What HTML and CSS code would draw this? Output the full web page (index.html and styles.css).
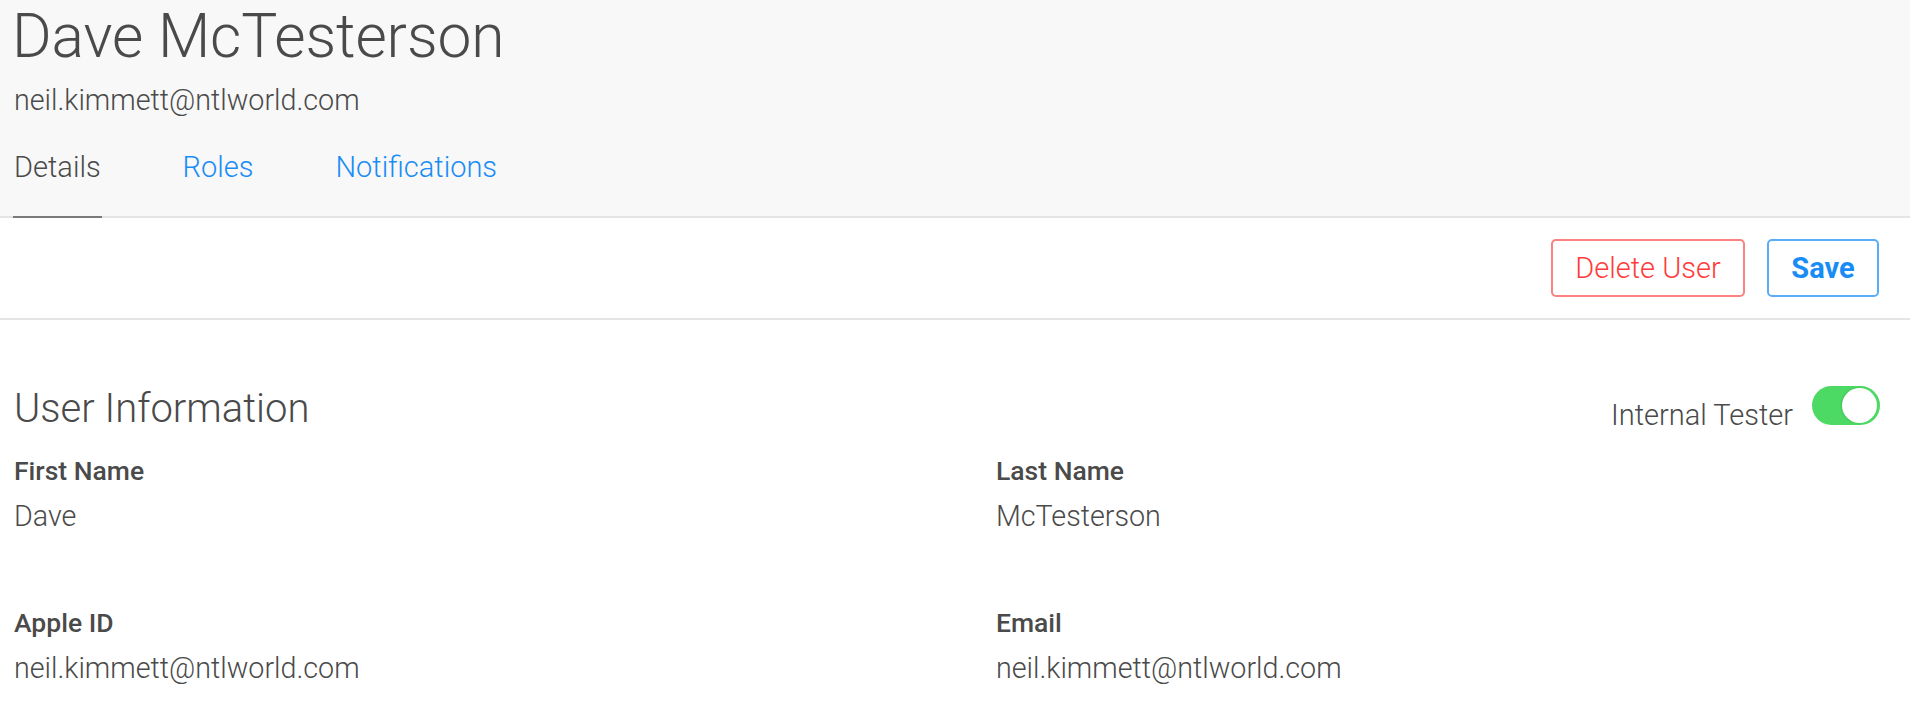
FILE: index.html
```html
<!DOCTYPE html>
<html lang="en">
<head>
<meta charset="utf-8">
<title>Dave McTesterson</title>
<link rel="stylesheet" href="styles.css">
</head>
<body>
<header class="header">
  <h1 class="title">Dave McTesterson</h1>
  <div class="subtitle">neil.kimmett@ntlworld.com</div>
  <nav class="tabs">
    <a class="tab active">Details</a>
    <a class="tab">Roles</a>
    <a class="tab">Notifications</a>
  </nav>
</header>
<div class="toolbar">
  <button class="btn btn-delete">Delete User</button>
  <button class="btn btn-save">Save</button>
</div>
<section class="section">
  <div class="section-head">
    <h2 class="section-title">User Information</h2>
    <div class="tester">
      <span class="tester-label">Internal Tester</span>
      <span class="switch"><span class="knob"></span></span>
    </div>
  </div>
  <div class="fields">
    <div class="field">
      <div class="label">First Name</div>
      <div class="value">Dave</div>
    </div>
    <div class="field">
      <div class="label">Last Name</div>
      <div class="value">McTesterson</div>
    </div>
    <div class="field">
      <div class="label">Apple ID</div>
      <div class="value">neil.kimmett@ntlworld.com</div>
    </div>
    <div class="field">
      <div class="label">Email</div>
      <div class="value">neil.kimmett@ntlworld.com</div>
    </div>
  </div>
</section>
</body>
</html>
```

FILE: styles.css
```css
* { box-sizing: border-box; }
html, body { margin: 0; padding: 0; background: #ffffff; }
body {
  font-family: Roboto, "Liberation Sans", Arial, sans-serif;
  font-weight: 300;
  color: #4a4a4a;
  width: 1910px;
  height: 724px;
  overflow: hidden;
}

.header {
  background: #f8f8f8;
  border-bottom: 2px solid #e4e4e4;
  padding: 2px 31px 0 14px;
}
.title {
  margin: 0 0 0 -2px;
  font-size: 60.5px;
  line-height: 70px;
  font-weight: 300;
  color: #4a4a4a;
  letter-spacing: -0.1px;
}
.subtitle {
  margin-top: 11px;
  font-size: 28.7px;
  line-height: 34px;
  color: #4a4a4a;
}
.tabs {
  display: flex;
  gap: 81px;
  margin-top: 33px;
  margin-bottom: -2px;
}
.tab {
  font-size: 29px;
  line-height: 34px;
  padding: 0 1px 32px;
  border-bottom: 2px solid transparent;
  color: #1a8cf5;
  margin-left: -1px;
}
.tab.active {
  color: #4a4a4a;
  border-bottom-color: #7a7a7a;
}

.toolbar {
  display: flex;
  justify-content: flex-end;
  gap: 22px;
  padding: 21px 31px;
  border-bottom: 2px solid #e4e4e4;
}
.btn {
  font-family: Roboto, "Liberation Sans", Arial, sans-serif;
  font-size: 29px;
  line-height: 54px;
  height: 58px;
  padding: 0 20px;
  background: #ffffff;
  border-radius: 5px;
  border: 2px solid;
  cursor: pointer;
}
.btn-delete {
  font-weight: 300;
  color: #ff3b3b;
  border-color: #ff8080;
  width: 194px;
}
.btn-save {
  font-weight: 700;
  color: #1a8cf5;
  border-color: #5aaef7;
  width: 112px;
}

.section {
  padding: 66px 30px 0 14px;
}
.section-head {
  display: flex;
  justify-content: space-between;
  align-items: flex-start;
}
.section-title {
  margin: 0;
  font-size: 40px;
  line-height: 46px;
  font-weight: 300;
  color: #4a4a4a;
}
.tester {
  display: flex;
  align-items: baseline;
  gap: 19px;
}
.tester-label {
  font-size: 29px;
  line-height: 34px;
}
.switch {
  display: block;
  position: relative;
  width: 68px;
  height: 39px;
  border-radius: 20px;
  background: #4cd964;
}
.knob {
  position: absolute;
  top: 2px;
  right: 3px;
  width: 35px;
  height: 35px;
  border-radius: 50%;
  background: #ffffff;
  box-shadow: -1px 0 2px rgba(0, 0, 0, 0.12);
}

.fields {
  display: grid;
  grid-template-columns: 982px 1fr;
  row-gap: 74px;
  margin-top: 23px;
}
.label {
  font-size: 26.5px;
  line-height: 32px;
  font-weight: 500;
  color: #4a4a4a;
}
.value {
  margin-top: 12px;
  font-size: 28.7px;
  line-height: 34px;
  color: #4a4a4a;
}
```
